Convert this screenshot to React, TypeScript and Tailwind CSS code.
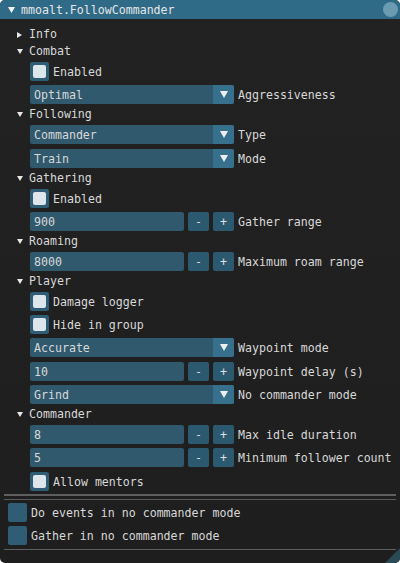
import React from "react";

function DownTri({ w = 6, h = 5, color = "#e8e8e8" }: { w?: number; h?: number; color?: string }) {
  return (
    <svg width={w} height={h} viewBox={`0 0 ${w} ${h}`}>
      <polygon points={`0,0 ${w},0 ${w / 2},${h}`} fill={color} />
    </svg>
  );
}

function RightTri() {
  return (
    <svg width={5} height={6} viewBox="0 0 5 6">
      <polygon points="0,0 5,3 0,6" fill="#e8e8e8" />
    </svg>
  );
}

function TreeNode({ label, open = true }: { label: string; open?: boolean }) {
  return (
    <div className="flex h-[13px] items-center pl-[9px]">
      <div className="flex w-[12px] items-center">{open ? <DownTri /> : <RightTri />}</div>
      <span className="leading-[13px] text-[#d8d8d8]">{label}</span>
    </div>
  );
}

function Check({ label, checked = true, extra = "" }: { label: string; checked?: boolean; extra?: string }) {
  return (
    <div className={"flex h-[19px] items-center gap-[4px] " + extra}>
      <div className="flex h-[19px] w-[19px] items-center justify-center rounded-[2px] bg-[#2e5d75]">
        {checked && <div className="h-[13px] w-[13px] rounded-[2px] bg-[#dce6eb]" />}
      </div>
      <span className="pt-[1px] text-[#d8d8d8]">{label}</span>
    </div>
  );
}

function Combo({ value, label, extra = "" }: { value: string; label: string; extra?: string }) {
  return (
    <div className={"flex h-[19px] items-center gap-[4px] " + extra}>
      <div className="flex h-[19px] w-[204px] items-center overflow-hidden rounded-[2px] bg-[#30596d]">
        <span className="flex-1 pl-[4px] pt-[1px] text-[#d8d8d8]">{value}</span>
        <div className="flex h-[19px] w-[21px] items-center justify-center bg-[#36708c]">
          <DownTri w={8} h={7} color="#f0f0f0" />
        </div>
      </div>
      <span className="pt-[1px] text-[#d8d8d8]">{label}</span>
    </div>
  );
}

function NumInput({ value, label, extra = "" }: { value: string; label: string; extra?: string }) {
  return (
    <div className={"flex h-[19px] items-center gap-[4px] " + extra}>
      <div className="flex h-[19px] w-[154px] items-center rounded-[2px] bg-[#30596d] pl-[4px] pt-[1px] text-[#d8d8d8]">
        {value}
      </div>
      <div className="flex h-[19px] w-[21px] items-center justify-center rounded-[2px] bg-[#2b5a70] pt-[1px] text-[#d8d8d8]">
        -
      </div>
      <div className="flex h-[19px] w-[21px] items-center justify-center rounded-[2px] bg-[#2b5a70] pt-[1px] text-[#e0e0e0]">
        +
      </div>
      <span className="pt-[1px] text-[#d8d8d8]">{label}</span>
    </div>
  );
}

export default function App() {
  return (
    <div className="h-[563px] w-[400px] bg-white font-['DejaVu_Sans_Mono',monospace] text-[11.6px] leading-[13px]">
      <div className="relative flex h-full w-full flex-col overflow-hidden rounded-[5px] bg-gradient-to-b from-[#222222] to-[#1e1e1e]">
        <div className="flex h-[19px] items-center bg-[#2f6a87]">
          <div className="ml-[8px] flex w-[13px] items-center">
            <DownTri w={7} h={6} color="#f2f2f2" />
          </div>
          <span className="pt-[1px] text-[#e6e6e6]">mmoalt.FollowCommander</span>
          <div className="ml-auto mr-[2px] h-[15px] w-[15px] rounded-full bg-[#6a9bb1]" />
        </div>

        <div className="flex flex-col gap-[4px] pl-[8px] pt-[9px]">
          <TreeNode label="Info" open={false} />
          <TreeNode label="Combat" />
          <div className="flex flex-col gap-[4px] pl-[22px]">
            <Check label="Enabled" />
            <Combo value="Optimal" label="Aggressiveness" />
          </div>
          <TreeNode label="Following" />
          <div className="flex flex-col gap-[4px] pl-[22px]">
            <Combo value="Commander" label="Type" />
            <Combo value="Train" label="Mode" extra="mt-[1px]" />
          </div>
          <TreeNode label="Gathering" />
          <div className="flex flex-col gap-[4px] pl-[22px]">
            <Check label="Enabled" />
            <NumInput value="900" label="Gather range" />
          </div>
          <TreeNode label="Roaming" />
          <div className="flex flex-col gap-[4px] pl-[22px]">
            <NumInput value="8000" label="Maximum roam range" />
          </div>
          <TreeNode label="Player" />
          <div className="flex flex-col gap-[4px] pl-[22px]">
            <Check label="Damage logger" />
            <Check label="Hide in group" />
            <Combo value="Accurate" label="Waypoint mode" />
            <NumInput value="10" label="Waypoint delay (s)" extra="mt-[1px]" />
            <Combo value="Grind" label="No commander mode" />
          </div>
          <TreeNode label="Commander" />
          <div className="flex flex-col gap-[4px] pl-[22px]">
            <NumInput value="8" label="Max idle duration" />
            <NumInput value="5" label="Minimum follower count" />
            <Check label="Allow mentors" extra="mt-[1px]" />
          </div>
        </div>

        <div className="mx-[4px] mt-[3px] h-[2px] bg-[#5e5e5e]" />
        <div className="mx-[4px] mt-[3px] h-[1px] bg-[#5a5a5a]" />

        <div className="mt-[3px] flex flex-col gap-[4px] pl-[8px]">
          <Check label="Do events in no commander mode" checked={false} />
          <Check label="Gather in no commander mode" checked={false} />
        </div>
        <div className="mx-[4px] mt-[4px] h-[1px] bg-[#5e5e5e]" />

        <svg className="absolute bottom-0 right-0" width={15} height={15} viewBox="0 0 15 15">
          <polygon points="15,0 15,15 0,15" fill="#2a4a56" />
        </svg>
      </div>
    </div>
  );
}
